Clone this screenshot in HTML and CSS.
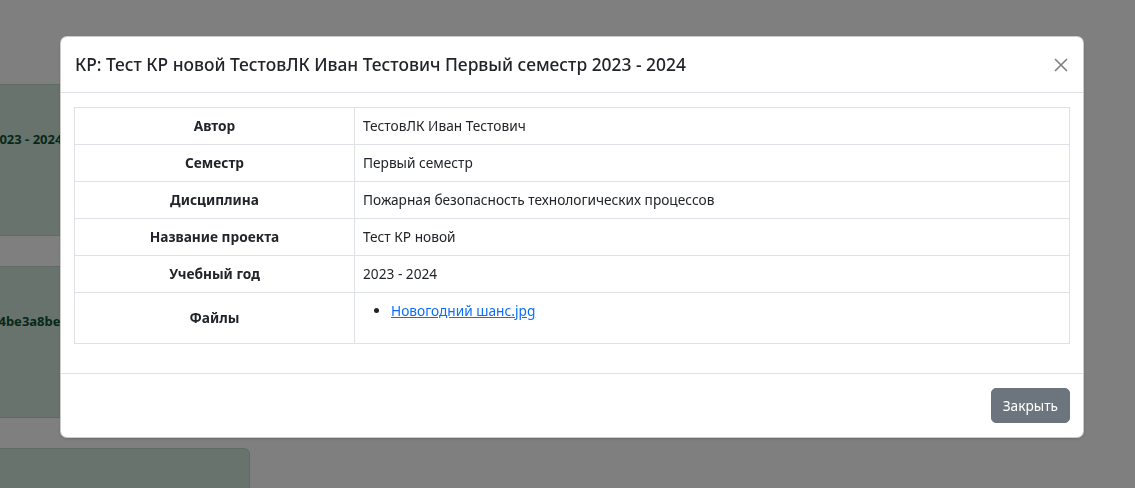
FILE: index.html
```html
<!DOCTYPE html>
<html lang="ru">
<head>
<meta charset="utf-8">
<title>КР</title>
<link rel="stylesheet" href="styles.css">
</head>
<body>
<div class="page">
  <div class="card-col">
    <div class="card"><div class="card-title t1">2023 - 2024</div></div>
    <div class="card"><div class="card-title t2">f04be3a8be12</div></div>
    <div class="card"></div>
  </div>
</div>

<div class="backdrop"></div>

<div class="modal-dialog">
  <div class="modal-content">
    <div class="modal-header">
      <h5 class="modal-title">КР: Тест КР новой ТестовЛК Иван Тестович Первый семестр 2023 - 2024</h5>
      <button class="btn-close" type="button" aria-label="Close">
        <svg width="14" height="14" viewBox="0 0 14 14"><path d="M1 1L13 13M13 1L1 13" stroke="#000" stroke-width="1.6" stroke-linecap="butt"/></svg>
      </button>
    </div>
    <div class="modal-body">
      <table class="table">
        <tbody>
          <tr><th>Автор</th><td>ТестовЛК Иван Тестович</td></tr>
          <tr><th>Семестр</th><td>Первый семестр</td></tr>
          <tr><th>Дисциплина</th><td>Пожарная безопасность технологических процессов</td></tr>
          <tr><th>Название проекта</th><td>Тест КР новой</td></tr>
          <tr><th>Учебный год</th><td>2023 - 2024</td></tr>
          <tr><th>Файлы</th><td><ul class="files"><li><a href="#">Новогодний шанс.jpg</a></li></ul></td></tr>
        </tbody>
      </table>
    </div>
    <div class="modal-footer">
      <button class="btn-secondary" type="button">Закрыть</button>
    </div>
  </div>
</div>
</body>
</html>
```

FILE: styles.css
```css
* { box-sizing: border-box; }
html, body {
  margin: 0;
  padding: 0;
  background: #fff;
  font-family: "Noto Sans", "Open Sans", sans-serif;
  color: #212529;
  font-size: 13.7px;
  overflow: hidden;
}
.page {
  width: 1135px;
  height: 488px;
  overflow: hidden;
}
.card-col {
  margin-left: -60px;
  padding-top: 84px;
  width: 310px;
  display: flex;
  flex-direction: column;
  gap: 30px;
}
.card {
  height: 152px;
  flex: none;
  background: #d1e7dd;
  border: 1px solid #badbcc;
  border-radius: 6px;
  padding-top: 44px;
}
.card-title {
  font-weight: 700;
  font-size: 13px;
  color: #0f5132;
  line-height: 21px;
  white-space: nowrap;
}
.t1 { padding-left: 51px; }
.t2 { padding-left: 45px; }

.backdrop {
  position: fixed;
  inset: 0;
  background: rgba(0, 0, 0, 0.5);
}
.modal-dialog {
  position: fixed;
  left: 60px;
  top: 36px;
  width: 1024px;
}
.modal-content {
  background: #fff;
  border: 1px solid rgba(0, 0, 0, 0.2);
  border-radius: 7px;
  box-shadow: 0 1px 3px rgba(0,0,0,.15);
}
.modal-header {
  display: flex;
  align-items: center;
  justify-content: space-between;
  padding: 15px 14px 15px 14px;
  border-bottom: 1px solid #dee2e6;
}
.modal-title {
  margin: 0;
  font-size: 17.4px;
  font-weight: 500;
  line-height: 25px;
}
.btn-close {
  border: 0;
  background: transparent;
  padding: 0;
  width: 16px;
  height: 16px;
  display: flex;
  align-items: center;
  justify-content: center;
  opacity: 0.5;
  cursor: pointer;
}
.modal-body {
  padding: 14px 13px;
}
.table {
  width: 100%;
  border-collapse: collapse;
  margin-bottom: 15px;
}
.table th, .table td {
  border: 1px solid #dee2e6;
  padding: 8px;
  line-height: 20px;
  font-size: 13.7px;
}
.table th {
  width: 280px;
  text-align: center;
  font-weight: 700;
  vertical-align: middle;
}
.table td {
  text-align: left;
  vertical-align: top;
}
.files {
  margin: 0 0 14px 0;
  padding-left: 28px;
}
.files a {
  color: #0d6efd;
  text-decoration: underline;
}
.modal-footer {
  display: flex;
  justify-content: flex-end;
  padding: 14px 13px 14px;
  border-top: 1px solid #dee2e6;
}
.btn-secondary {
  font-family: inherit;
  font-size: 13.7px;
  line-height: 21px;
  padding: 6px 11px;
  color: #fff;
  background: #6c757d;
  border: 1px solid #6c757d;
  border-radius: 5px;
  cursor: pointer;
}
```
